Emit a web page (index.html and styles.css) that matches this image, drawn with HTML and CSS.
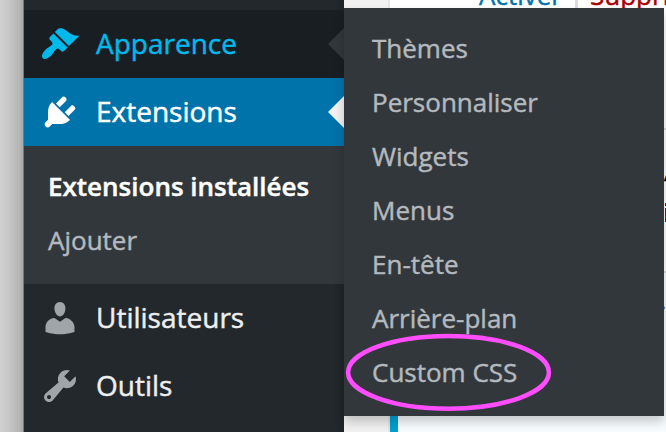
FILE: index.html
```html
<!DOCTYPE html>
<html lang="fr">
<head>
<meta charset="utf-8">
<title>Extensions</title>
<link rel="stylesheet" href="styles.css">
</head>
<body>
<div class="screen">
  <div class="gutter"></div>
  <nav class="sidebar">
    <div class="previous"></div>
    <a class="item open">
      <svg class="icon" viewBox="0 0 20 20"><path d="M14.48 11.06L7.41 3.99l1.5-1.5c.5-.56 2.3-.47 3.51.32 1.21.8 1.43 1.28 2.91 2.1 1.18.64 2.45 1.26 4.45.85zm-.71.71L6.7 4.7 4.93 6.47c-.39.39-.39 1.02 0 1.41l1.06 1.06c.39.39.39 1.03 0 1.42-.6.6-1.43 1.11-2.21 1.69-.35.26-.7.53-1.01.84C1.43 14.23.4 16.08 1.4 17.07c.99 1 2.84-.03 4.18-1.36.31-.31.58-.66.85-1.02.57-.78 1.08-1.61 1.69-2.21.39-.39 1.02-.39 1.41 0l1.06 1.06c.39.39 1.02.39 1.41 0z"/></svg>
      <span class="label">Apparence</span>
    </a>
    <a class="item current">
      <svg class="icon" viewBox="0 0 20 20"><path d="M13.11 4.36L9.87 7.6 8 5.73l3.24-3.24c.35-.34 1.05-.2 1.56.32.52.51.66 1.21.31 1.55zm-8 1.77l.91-1.12 9.01 9.01-1.19.84c-.71.71-2.63 1.16-3.82 1.16H6.14L4.9 17.26c-.59.59-1.54.59-2.12 0-.59-.58-.59-1.53 0-2.12l1.24-1.24v-3.88c0-1.13.4-3.19 1.09-3.89zm7.26 3.97l3.24-3.24c.34-.35 1.04-.21 1.55.31.52.51.66 1.21.31 1.55l-3.24 3.25z"/></svg>
      <span class="label">Extensions</span>
    </a>
    <div class="submenu">
      <a class="sub selected">Extensions installées</a>
      <a class="sub">Ajouter</a>
    </div>
    <a class="item">
      <svg class="icon" viewBox="0 0 20 20"><path d="M10 9.25c-2.27 0-2.73-3.44-2.73-3.44C7 4.02 7.82 2 9.97 2c2.16 0 2.98 2.02 2.71 3.81 0 0-.41 3.44-2.68 3.44zm0 2.57L12.72 10c2.39 0 4.52 2.33 4.52 4.53v2.49s-3.65 1.13-7.24 1.13c-3.65 0-7.24-1.13-7.24-1.13v-2.49c0-2.25 1.94-4.48 4.47-4.48z"/></svg>
      <span class="label">Utilisateurs</span>
    </a>
    <a class="item">
      <svg class="icon" viewBox="0 0 20 20"><path d="M16.68 9.77c-1.34 1.34-3.3 1.67-4.95.99l-5.41 6.52c-.99.99-2.59.99-3.58 0s-.99-2.59 0-3.57l6.52-5.42c-.68-1.65-.35-3.61.99-4.95 1.28-1.28 3.12-1.62 4.72-1.06l-2.89 2.89 2.82 2.82 2.86-2.87c.53 1.58.18 3.39-1.08 4.65zM3.81 16.21c.4.39 1.04.39 1.43 0 .4-.4.4-1.04 0-1.43-.39-.4-1.03-.4-1.43 0-.39.39-.39 1.03 0 1.43z"/></svg>
      <span class="label">Outils</span>
    </a>
  </nav>
  <main class="content">
    <div class="table">
      <div class="row inactive">
        <span class="action activate">Activer</span><span class="divider"></span><span class="action delete">Supprimer</span>
      </div>
      <div class="row plain"></div>
      <div class="row tinted"></div>
      <div class="row active"></div>
    </div>
  </main>
  <div class="sliver name">A</div>
  <div class="sliver remove"></div>
  <div class="sliver detail">r</div>
  <div class="flyout">
    <a class="sub">Thèmes</a>
    <a class="sub">Personnaliser</a>
    <a class="sub">Widgets</a>
    <a class="sub">Menus</a>
    <a class="sub">En-tête</a>
    <a class="sub">Arrière-plan</a>
    <a class="sub">Custom CSS</a>
  </div>
  <svg class="highlight" viewBox="0 0 208 80"><ellipse cx="103.5" cy="39.4" rx="100.4" ry="36.3"/></svg>
</div>
</body>
</html>
```
FILE: styles.css
```css
* { box-sizing: border-box; }

body {
  margin: 0;
  overflow: hidden;
  font-family: "Open Sans", sans-serif;
  -webkit-text-stroke: .45px currentColor;
}

.screen {
  position: relative;
  display: flex;
  width: 666px;
  height: 432px;
  overflow: hidden;
}

.gutter {
  flex: 0 0 24px;
  background: linear-gradient(90deg, #d1d1d1 0, #c8c8c8 8px, #b4b4b4 20px, #a8a8a8 23px, #777 23px);
}

.sidebar {
  flex: 0 0 320px;
  background: linear-gradient(90deg, transparent 310px, rgba(0, 0, 0, .12)) #23282d;
}

.previous { height: 10px; }

.item {
  position: relative;
  display: flex;
  align-items: center;
  gap: 16px;
  height: 68px;
  padding-left: 16px;
  color: #eee;
  font-size: 28px;
  line-height: 36px;
}

.label { padding-bottom: 2px; }

.icon {
  width: 40px;
  height: 40px;
  fill: #a0a5aa;
}

.open { background: #191e23; color: #00b9eb; }
.open .icon { fill: #00b9eb; }
.current { background: #0073aa; color: #fff; }
.current .icon { fill: #fff; }

.open::after,
.current::after {
  content: "";
  position: absolute;
  right: 0;
  top: 18px;
  border: 16px solid transparent;
  border-left: 0;
  border-right-color: #32373c;
}

.current::after { border-right-color: #f1f1f1; }

.submenu {
  height: 138px;
  padding: 13px 0 0 24px;
  background: #32373c;
}

.sub {
  display: block;
  height: 54px;
  color: #b4b9be;
  font-size: 26px;
  line-height: 54px;
  white-space: nowrap;
}

.selected { color: #fff; font-weight: 600; }

.content {
  flex: 1;
  min-width: 0;
  padding-left: 44px;
  background: #f1f1f1;
}

.table {
  border-left: 2px solid #e5e5e5;
  background: #fff;
}

.row { overflow: hidden; }

.inactive {
  display: flex;
  height: 128px;
  padding-left: 89px;
  font-size: 26px;
  line-height: 36px;
}

.action { flex-shrink: 0; margin-top: -23px; white-space: nowrap; }
.activate { width: 96px; color: #0073aa; }
.delete { margin-left: 12px; color: #a00; }
.divider { flex: 0 0 3px; height: 12px; background: #ddd; }
.plain { height: 143px; border-top: 2px solid #ddd; }
.tinted { height: 142px; border-top: 2px solid #ddd; background: #f7fcfe; }
.active { height: 19px; background: #f7fcfe; border-left: 8px solid #00a0d2; }

.flyout {
  position: absolute;
  left: 344px;
  top: 8px;
  width: 320px;
  height: 408px;
  padding: 13px 28px;
  background: #32373c;
  box-shadow: 0 6px 10px rgba(0, 0, 0, .2);
}

.sliver {
  position: absolute;
  left: 664px;
  width: 2px;
  overflow: hidden;
  color: #000;
  font-size: 26px;
  line-height: 30px;
}

.name { top: 156px; height: 28px; }
.remove { top: 203px; left: 665px; height: 19px; background: linear-gradient(#a00 3px, transparent 3px, transparent 5px, #a00 5px); }
.detail { top: 296px; height: 30px; text-indent: -10px; }

.highlight {
  position: absolute;
  left: 345px;
  top: 333px;
  width: 208px;
  height: 80px;
  fill: none;
  stroke: #ff4dff;
  stroke-width: 4.5;
}
```
